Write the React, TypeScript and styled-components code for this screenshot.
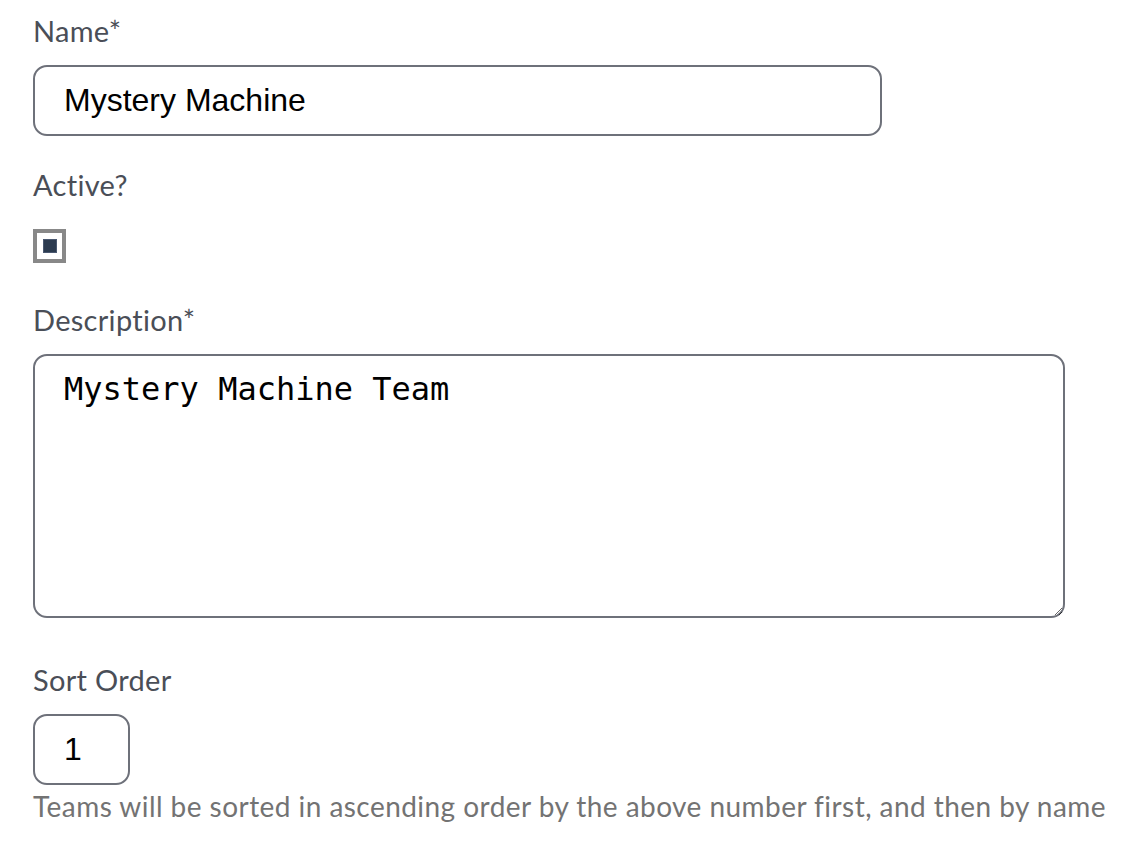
import React from 'react';
import styled, { createGlobalStyle } from 'styled-components';

const GlobalStyle = createGlobalStyle`
  html, body {
    margin: 0;
    padding: 0;
    background: #ffffff;
  }
`;

const Form = styled.form`
  padding: 13px 0 0 33px;
  width: 1074px;
  font-family: Lato, 'Noto Sans', sans-serif;
`;

const Field = styled.div<{ $gap?: number }>`
  display: flex;
  flex-direction: column;
  align-items: flex-start;
  margin-bottom: ${(p) => p.$gap ?? 0}px;
`;

const Label = styled.label`
  font-size: 29px;
  line-height: 36px;
  letter-spacing: 0.3px;
  color: #4a4e57;
  margin-bottom: 16px;
`;

const TextInput = styled.input<{ $width: number; $pad?: number }>`
  box-sizing: border-box;
  width: ${(p) => p.$width}px;
  height: 71px;
  border: 2px solid #6e717a;
  border-radius: 14px;
  padding: 0 ${(p) => p.$pad ?? 29}px;
  font-family: 'Liberation Sans', Arial, sans-serif;
  font-size: 32px;
  color: #000;
  background: #fff;
  outline: none;
`;

const TextArea = styled.textarea`
  box-sizing: border-box;
  width: 1032px;
  height: 264px;
  border: 2px solid #6e717a;
  border-radius: 14px;
  padding: 13px 29px;
  font-family: 'DejaVu Sans Mono', monospace;
  font-size: 32px;
  line-height: 40px;
  color: #000;
  background: #fff;
  outline: none;
  resize: vertical;
`;

const CheckBox = styled.span`
  box-sizing: border-box;
  margin-top: 10px;
  width: 33px;
  height: 34px;
  border: 4px solid #888888;
  display: flex;
  align-items: center;
  justify-content: center;
  background: #fff;
`;

const CheckMark = styled.span`
  box-sizing: border-box;
  width: 14px;
  height: 14px;
  background: #2b3a4f;
  border: 1px solid #4a5870;
`;

const Help = styled.p`
  margin: 3px 0 0;
  font-size: 28px;
  line-height: 36px;
  letter-spacing: 0.45px;
  color: #737373;
`;

export default function App() {
  return (
    <>
      <GlobalStyle />
      <Form>
        <Field $gap={31}>
          <Label>Name*</Label>
          <TextInput $width={849} defaultValue="Mystery Machine" />
        </Field>
        <Field $gap={39}>
          <Label>Active?</Label>
          <CheckBox>
            <CheckMark />
          </CheckBox>
        </Field>
        <Field $gap={44}>
          <Label>Description*</Label>
          <TextArea defaultValue="Mystery Machine Team" />
        </Field>
        <Field>
          <Label>Sort Order</Label>
          <TextInput $width={97} $pad={29} defaultValue="1" />
          <Help>Teams will be sorted in ascending order by the above number first, and then by name</Help>
        </Field>
      </Form>
    </>
  );
}
